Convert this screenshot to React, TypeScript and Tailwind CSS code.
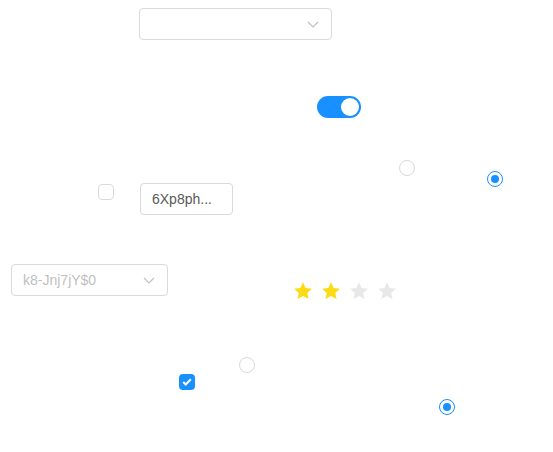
const font = { fontFamily: '"Liberation Sans", Arial, sans-serif' }

function Chevron() {
  return (
    <svg width="12" height="7" viewBox="0 0 12 7" fill="none" className="text-[#bfbfbf]">
      <path d="M1 1l5 5 5-5" stroke="currentColor" strokeWidth="1.1" />
    </svg>
  )
}

function Radio({ checked }: { checked?: boolean }) {
  return checked ? (
    <span className="w-4 h-4 rounded-full border border-[#1890ff] bg-white flex items-center justify-center">
      <span className="w-2 h-2 rounded-full bg-[#1890ff]" />
    </span>
  ) : (
    <span className="block w-4 h-4 rounded-full border border-[#d9d9d9] bg-white" />
  )
}

function Star({ on }: { on?: boolean }) {
  return (
    <svg width="20" height="20" viewBox="0 0 24 24" className={on ? 'text-[#fadb14]' : 'text-[#e8e8e8]'}>
      <path fill="currentColor" d="M12 1.5l3.2 6.9 7.5.8-5.6 5.1 1.6 7.4L12 17.9l-6.7 3.8 1.6-7.4-5.6-5.1 7.5-.8z" />
    </svg>
  )
}

export default function App() {
  return (
    <div className="relative w-[553px] h-[452px] bg-white overflow-hidden" style={font}>
      <div className="absolute left-[139px] top-[8px] w-[193px] h-[32px] rounded border border-[#d9d9d9] flex items-center justify-end pr-[12px]">
        <Chevron />
      </div>

      <div className="absolute left-[317px] top-[96px] w-[44px] h-[22px] rounded-full bg-[#1890ff] flex items-center justify-end px-[2px]">
        <span className="w-[18px] h-[18px] rounded-full bg-white" />
      </div>

      <div className="absolute left-[399px] top-[160px]"><Radio /></div>
      <div className="absolute left-[487px] top-[171px]"><Radio checked /></div>

      <span className="absolute left-[98px] top-[184px] w-4 h-4 rounded-sm border border-[#d9d9d9] bg-white" />

      <div className="absolute left-[140px] top-[183px] w-[93px] h-[32px] rounded border border-[#d9d9d9] flex items-center pl-[11px] text-[14px] text-[#595959]">
        6Xp8ph...
      </div>

      <div className="absolute left-[11px] top-[264px] w-[157px] h-[32px] rounded border border-[#d9d9d9] flex items-center justify-between pl-[11px] pr-[12px] text-[14px] text-[#bfbfbf]">
        <span>k8-Jnj7jY$0</span>
        <Chevron />
      </div>

      <div className="absolute left-[293px] top-[281px] flex gap-[8px]">
        <Star on />
        <Star on />
        <Star />
        <Star />
      </div>

      <div className="absolute left-[239px] top-[357px]"><Radio /></div>

      <span className="absolute left-[179px] top-[374px] w-4 h-4 rounded-sm bg-[#1890ff] flex items-center justify-center">
        <svg width="10" height="8" viewBox="0 0 10 8" fill="none">
          <path d="M1.2 4l2.5 2.5L8.8 1.3" stroke="white" strokeWidth="2" />
        </svg>
      </span>

      <div className="absolute left-[439px] top-[399px]"><Radio checked /></div>
    </div>
  )
}
